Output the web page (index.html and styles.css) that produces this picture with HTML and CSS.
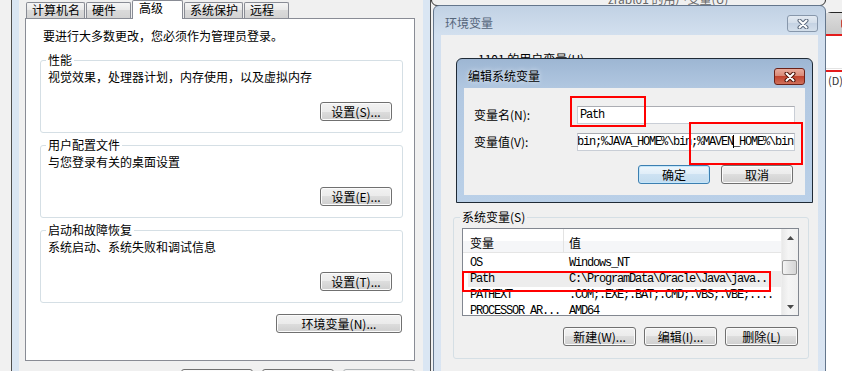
FILE: index.html
```html
<!DOCTYPE html>
<html lang="zh-CN">
<head>
    <meta charset="UTF-8">
    <meta name="viewport" content="width=device-width, initial-scale=1.0">
    <title>环境变量</title>
    <link rel="stylesheet" href="styles.css">
</head>
<body>
    <div class="desktop">
        <div class="back-win back-top">
            <span class="back-label">zrabl01 的用户变量(U)</span>
        </div>
        <div class="back-win back-right">
            <div class="back-title"><span class="back-close"></span></div>
            <div class="back-red"></div>
            <div class="back-gap"></div>
            <div class="back-red"></div>
            <div class="back-row">(D)</div>
        </div>

        <div class="win sysprop">
            <div class="sysprop-client">
                <div class="tabs">
                    <span class="tab">计算机名</span>
                    <span class="tab">硬件</span>
                    <span class="tab active">高级</span>
                    <span class="tab">系统保护</span>
                    <span class="tab">远程</span>
                </div>
                <div class="tab-panel">
                    <p class="note">要进行大多数更改，您必须作为管理员登录。</p>
                    <fieldset class="group">
                        <legend>性能</legend>
                        <p>视觉效果，处理器计划，内存使用，以及虚拟内存</p>
                        <div class="group-actions"><button class="btn">设置(S)...</button></div>
                    </fieldset>
                    <fieldset class="group">
                        <legend>用户配置文件</legend>
                        <p>与您登录有关的桌面设置</p>
                        <div class="group-actions"><button class="btn">设置(E)...</button></div>
                    </fieldset>
                    <fieldset class="group">
                        <legend>启动和故障恢复</legend>
                        <p>系统启动、系统失败和调试信息</p>
                        <div class="group-actions"><button class="btn">设置(T)...</button></div>
                    </fieldset>
                    <div class="panel-actions"><button class="btn btn-wide">环境变量(N)...</button></div>
                </div>
                <div class="dialog-actions">
                    <button class="btn">确定</button>
                    <button class="btn">取消</button>
                    <button class="btn" disabled>应用(A)</button>
                </div>
            </div>
        </div>

        <div class="win env">
            <div class="titlebar">
                <span class="title">环境变量</span>
                <span class="close close-idle">
                    <svg width="12" height="10" viewBox="0 0 12 10"><path d="M2.5 1.5 L9.5 8.5 M9.5 1.5 L2.5 8.5" stroke="#5d6b7e" stroke-width="4" stroke-linecap="round"/><path d="M2.5 1.5 L9.5 8.5 M9.5 1.5 L2.5 8.5" stroke="#fff" stroke-width="2" stroke-linecap="round"/></svg>
                </span>
            </div>
            <div class="env-client">
                <div class="user-label">1101 的用户变量(U)</div>
                <fieldset class="group sysvars">
                    <legend>系统变量(S)</legend>
                    <div class="listview">
                        <div class="lv-body">
                            <div class="lv-head"><span class="c1">变量</span><span class="c2">值</span></div>
                            <div class="lv-rows">
                                <div class="lv-row"><span class="c1 mono">OS</span><span class="c2 mono">Windows_NT</span></div>
                                <div class="lv-row selected"><span class="c1 mono">Path</span><span class="c2 mono">C:\ProgramData\Oracle\Java\java..</span></div>
                                <div class="lv-row"><span class="c1 mono">PATHEXT</span><span class="c2 mono">.COM;.EXE;.BAT;.CMD;.VBS;.VBE;....</span></div>
                                <div class="lv-row"><span class="c1 mono">PROCESSOR_AR...</span><span class="c2 mono">AMD64</span></div>
                            </div>
                        </div>
                        <div class="scrollbar">
                            <div class="sb-btn"><svg width="7" height="4" viewBox="0 0 7 4"><path d="M0 4 L3.5 0 L7 4Z" fill="#4a4a4a"/></svg></div>
                            <div class="sb-track"><div class="sb-thumb"></div></div>
                            <div class="sb-btn"><svg width="7" height="4" viewBox="0 0 7 4"><path d="M0 0 L3.5 4 L7 0Z" fill="#4a4a4a"/></svg></div>
                        </div>
                    </div>
                    <div class="group-actions">
                        <button class="btn btn-list">新建(W)...</button>
                        <button class="btn btn-list">编辑(I)...</button>
                        <button class="btn btn-list">删除(L)</button>
                    </div>
                </fieldset>
            </div>
        </div>

        <div class="win edit">
            <div class="titlebar">
                <span class="title title-glow">编辑系统变量</span>
                <span class="close close-hot">
                    <svg width="12" height="10" viewBox="0 0 12 10"><path d="M2.5 1.5 L9.5 8.5 M9.5 1.5 L2.5 8.5" stroke="#4b1309" stroke-width="4" stroke-linecap="round"/><path d="M2.5 1.5 L9.5 8.5 M9.5 1.5 L2.5 8.5" stroke="#fff" stroke-width="2" stroke-linecap="round"/></svg>
                </span>
            </div>
            <div class="edit-client">
                <div class="field">
                    <label>变量名(N):</label>
                    <div class="textbox mono">Path</div>
                </div>
                <div class="field">
                    <label>变量值(V):</label>
                    <div class="textbox scrolled mono"><span>\bin;%JAVA_HOME%\bin;%MAVEN<span class="caret"></span>_HOME%\bin</span></div>
                </div>
                <div class="edit-actions">
                    <button class="btn btn-default">确定</button>
                    <button class="btn">取消</button>
                </div>
            </div>
        </div>

        <div class="mark mark-name"></div>
        <div class="mark mark-value"></div>
        <div class="mark mark-row"></div>
    </div>
</body>
</html>
```

FILE: styles.css
```css
* {
    box-sizing: border-box;
}
body {
    margin: 0;
    font-family: "Noto Sans CJK SC", sans-serif;
    font-size: 12px;
    line-height: 16px;
    color: #000;
}
.desktop {
    position: relative;
    width: 842px;
    height: 371px;
    overflow: hidden;
    background: #f1f1f1;
}
.mono {
    font-family: "Liberation Mono", monospace;
    font-size: 12px;
    letter-spacing: -1.2px;
}
.win, .back-win, .mark {
    position: absolute;
}

/* windows behind */
.back-top {
    left: 431px;
    top: -40px;
    width: 395px;
    height: 46px;
    display: flex;
    align-items: flex-end;
    padding-left: 176px;
    border: 1px solid #2d2d2d;
    border-radius: 6px;
    background: #f0f0f0;
    color: #666;
}
.back-label {
    margin-bottom: -2px;
}
.back-right {
    left: 825px;
    top: 12px;
    width: 40px;
    height: 400px;
    border-left: 1px solid #262626;
    border-top: 1px solid #262626;
    border-radius: 6px 0 0 0;
    background: #fff;
}
.back-title {
    height: 21px;
    padding: 6px 0 0 15px;
    background: linear-gradient(#dcdcdc, #c9c9c9);
}
.back-close {
    display: block;
    width: 20px;
    height: 9px;
    border-radius: 2px;
    background: #c8473a;
}
.back-red {
    height: 2px;
    background: #e41c1c;
}
.back-gap {
    height: 33px;
    border-bottom: 1px solid #e4e4e4;
    margin-bottom: 1px;
}
.back-row {
    padding-left: 2px;
    font-size: 11px;
    color: #333;
}

/* system properties */
.sysprop {
    left: 11px;
    top: 0;
    width: 420px;
    border: 1px solid #4f4f4f;
    border-top: none;
    padding: 0 7px;
    background: #dae6f3;
}
.sysprop-client {
    display: flex;
    flex-direction: column;
    padding: 0 8px 20px 6px;
    background: #f0f0f0;
}
.tabs {
    display: flex;
    align-items: flex-end;
    height: 18px;
    padding-left: 1px;
}
.tab {
    min-width: 45px;
    height: 16px;
    margin-right: 1px;
    padding: 0 4px 0 5px;
    border: 1px solid #898c95;
    border-bottom: none;
    border-radius: 2px 2px 0 0;
    background: linear-gradient(#f5f5f5, #e8e8e8 50%, #dadada 50%, #d3d3d3);
    line-height: 14px;
}
.tab.active {
    position: relative;
    z-index: 1;
    min-width: 51px;
    height: 19px;
    margin-bottom: -1px;
    padding-left: 6px;
    background: #fff;
}
.tab-panel {
    display: flex;
    flex-direction: column;
    height: 343px;
    padding: 9px 11px 0 14px;
    border: 1px solid #898c95;
    background: #fff;
}
.note {
    margin: 0 0 8px 3px;
}
.group {
    margin: 0 0 4px;
    padding: 0 10px 11px 7px;
    border: 1px solid #d5dfe5;
    border-radius: 3px;
}
.group legend {
    margin-left: -2px;
    padding: 0 2px;
}
.group p {
    margin: 1px 0 0;
}
.group-actions {
    display: flex;
    justify-content: flex-end;
    gap: 8px;
    margin-top: 17px;
}
.panel-actions {
    display: flex;
    justify-content: flex-end;
    margin-top: 7px;
    padding-right: 1px;
}
.dialog-actions {
    display: flex;
    justify-content: flex-end;
    gap: 9px;
    margin-top: 8px;
}

/* buttons */
.btn {
    width: 72px;
    height: 19px;
    padding: 0;
    border: 1px solid #707070;
    border-radius: 3px;
    background: linear-gradient(#f2f2f2, #ebebeb 50%, #dddddd 50%, #cfcfcf);
    box-shadow: inset 0 0 0 1px #fbfbfb;
    font: inherit;
    line-height: 16px;
    color: #000;
}
.btn-wide {
    width: 126px;
}
.btn-list {
    width: 73px;
}
.btn:disabled {
    border-color: #adb2b5;
    background: #f4f4f4;
    box-shadow: none;
    color: #8b8b8b;
}
.btn-default {
    border-color: #3c7fb1;
    background: linear-gradient(#eef6fc, #dfedf8 50%, #cde2f2 50%, #c3dcef);
    box-shadow: inset 0 0 0 1px #c4e6fa;
}

/* aero frames */
.titlebar {
    display: flex;
    align-items: flex-start;
    justify-content: space-between;
    height: 29px;
    padding-top: 9px;
}
.title {
    margin-left: 4px;
}
.title-glow {
    text-shadow: 0 0 5px rgba(255, 255, 255, 0.9);
}
.close {
    display: flex;
    align-items: center;
    justify-content: center;
    width: 31px;
    height: 17px;
    border-radius: 3px;
}
.close-idle {
    border: 1px solid #8797ab;
    background: linear-gradient(#e3eaf2, #d2dde9 50%, #c5d3e3 50%, #d4dfeb);
}
.close-hot {
    border: 1px solid #6b2219;
    background: linear-gradient(#e8ab9c, #d98a78 45%, #c1442f 50%, #d0705a);
}

/* environment variables */
.env {
    left: 433px;
    top: 5px;
    width: 393px;
    padding: 0 7px;
    border: 1px solid #64768c;
    border-radius: 6px 6px 0 0;
    background: linear-gradient(#c1d1e4, #d3e0ef 30px, #dae5f2);
}
.env .title {
    color: #55657a;
}
.env-client {
    display: flex;
    flex-direction: column;
    height: 360px;
    padding: 16px 9px 0 12px;
    background: #f0f0f0;
}
.user-label {
    margin: 0 0 142px 25px;
}
.sysvars {
    padding: 0 9px 12px 8px;
}
.sysvars .group-actions {
    margin-top: 11px;
    padding-right: 1px;
}
.listview {
    display: flex;
    height: 88px;
    margin-top: 3px;
    border: 1px solid #828790;
    background: #fff;
}
.lv-body {
    flex: 1;
    overflow: hidden;
}
.lv-head {
    display: flex;
    height: 24px;
    padding-top: 6px;
    border-bottom: 1px solid #e5e5e5;
    background: linear-gradient(#fff 50%, #f5f6f8 50%);
}
.lv-head .c2 {
    margin-top: -6px;
    padding-top: 6px;
    padding-left: 5px;
    border-left: 1px solid #e3e3e3;
}
.lv-rows {
    padding-top: 2px;
}
.lv-row {
    display: flex;
    height: 16px;
    white-space: nowrap;
}
.lv-row.selected {
    background: linear-gradient(to right, transparent 5px, #ededed 5px);
}
.c1 {
    flex: 0 0 100px;
    padding-left: 7px;
    overflow: hidden;
}
.c2 {
    flex: 1;
    padding-left: 6px;
}
.scrollbar {
    display: flex;
    flex-direction: column;
    width: 17px;
    border-left: 1px solid #eeeeee;
    background: linear-gradient(to right, #e9e9e9, #f5f5f5 40%, #f0f0f0);
}
.sb-btn {
    display: flex;
    align-items: center;
    justify-content: center;
    height: 17px;
}
.sb-track {
    flex: 1;
    padding: 14px 1px 0 0;
}
.sb-thumb {
    height: 15px;
    border: 1px solid #979797;
    border-radius: 2px;
    background: linear-gradient(to right, #f4f4f4, #e2e2e2 50%, #d6d6d6);
}

/* edit system variable */
.edit {
    left: 456px;
    top: 58px;
    width: 357px;
    height: 145px;
    display: flex;
    flex-direction: column;
    padding: 0 7px 7px;
    border: 1px solid #1f2a36;
    border-radius: 6px 6px 0 0;
    background: linear-gradient(#9db6d3, #b2c8e1 30px, #bad0e8);
}
.edit-client {
    flex: 1;
    padding: 18px 10px 0;
    background: #f0f0f0;
}
.field {
    display: flex;
    align-items: center;
}
.field + .field {
    margin-top: 9px;
}
.field label {
    width: 103px;
}
.textbox {
    display: flex;
    align-items: center;
    width: 218px;
    height: 18px;
    padding: 0 1px 0 2px;
    overflow: hidden;
    white-space: nowrap;
    border: 1px solid #c9ced6;
    border-top-color: #abadb3;
    background: #fff;
}
.textbox.scrolled {
    justify-content: flex-end;
}
.caret {
    display: inline-block;
    width: 1px;
    height: 13px;
    margin-right: -1px;
    vertical-align: middle;
    background: #000;
}
.edit-actions {
    display: flex;
    justify-content: flex-end;
    gap: 11px;
    margin-top: 14px;
    padding-right: 2px;
}

/* red annotation boxes */
.mark {
    border: 2px solid #f00;
}
.mark-name {
    left: 570px;
    top: 96px;
    width: 76px;
    height: 31px;
}
.mark-value {
    left: 689px;
    top: 122px;
    width: 114px;
    height: 43px;
}
.mark-row {
    left: 462px;
    top: 271px;
    width: 309px;
    height: 21px;
}
```
